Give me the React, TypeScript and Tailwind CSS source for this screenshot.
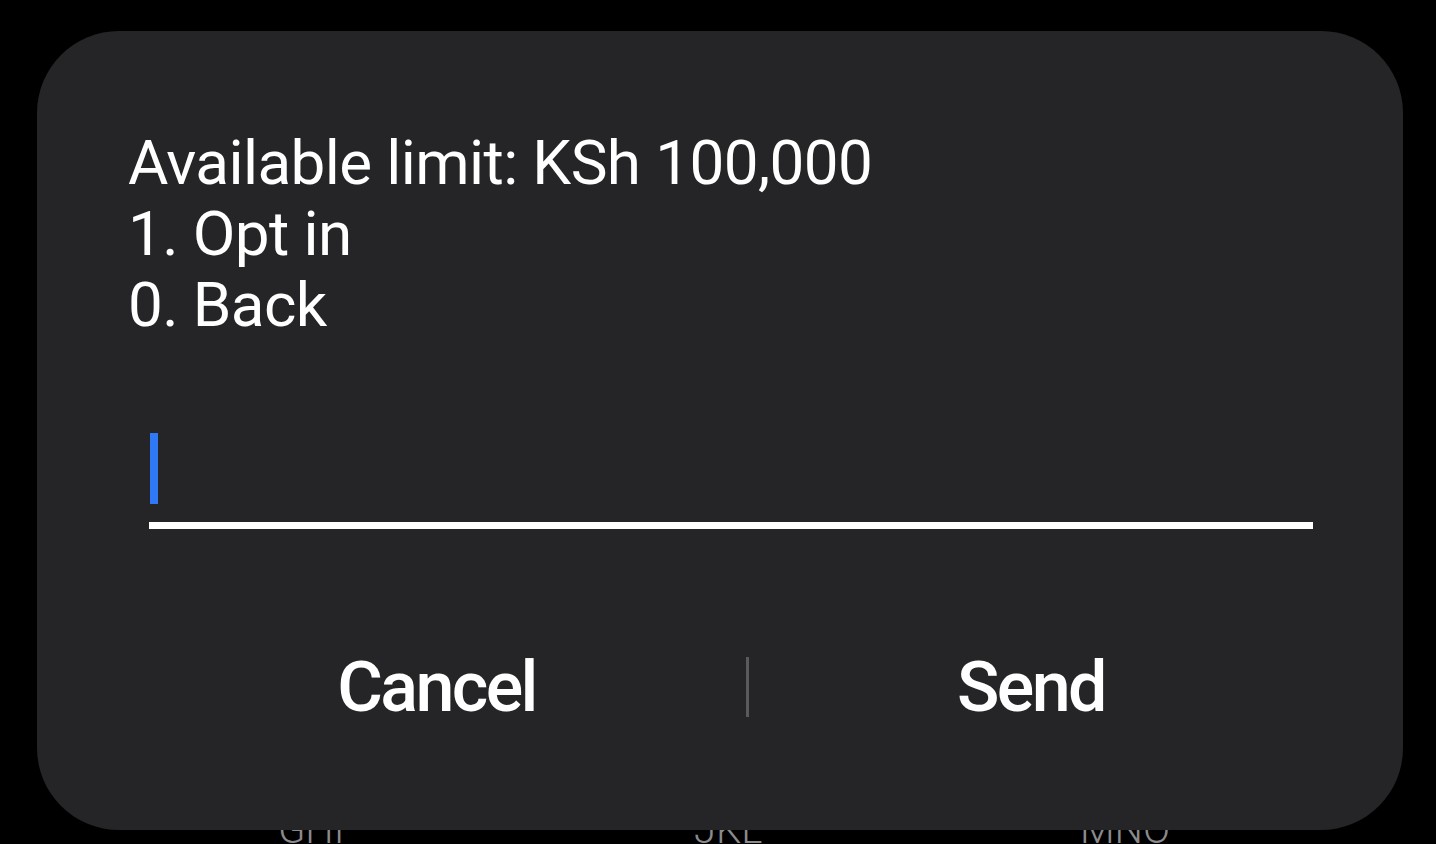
import React from "react";

export default function App() {
  const font = { fontFamily: "Roboto, 'Noto Sans', sans-serif" };
  return (
    <div className="w-[1436px] h-[844px] bg-black overflow-hidden flex flex-col" style={font}>
      <div className="relative z-10 ml-[37px] mt-[31px] w-[1366px] h-[799px] shrink-0 rounded-[82px] bg-[#252527] flex flex-col">
        <div className="pl-[91px] pt-[96px] text-[62px] leading-[71px] tracking-[-0.6px] text-white">
          <div>Available limit: KSh 100,000</div>
          <div>1. Opt in</div>
          <div>0. Back</div>
        </div>
        <div className="ml-[112px] mr-[90px] mt-[93px] flex flex-col">
          <div className="ml-px h-[71px] w-[8px] bg-[#2f78f6]" />
          <div className="mt-[18px] h-[7px] w-full bg-white" />
        </div>
        <div className="ml-[90px] mt-[128px] flex items-center h-[60px]">
          <div className="w-[619px] flex justify-center text-[70px] font-medium tracking-[-2.6px] text-white leading-none">
            Cancel
          </div>
          <div className="w-[3px] h-[60px] bg-[#5a5a5c]" />
          <div className="w-[564px] flex justify-center text-[70px] font-medium tracking-[-2.6px] text-white leading-none">
            Send
          </div>
        </div>
      </div>
      <div className="-mt-[20px] flex text-[40px] leading-none text-[#8a8a8c] font-light">
        <div className="w-[620px] pl-[278px]">GHI</div>
        <div className="w-[390px] pl-[74px]">JKL</div>
        <div className="pl-[70px]">MNO</div>
      </div>
    </div>
  );
}
